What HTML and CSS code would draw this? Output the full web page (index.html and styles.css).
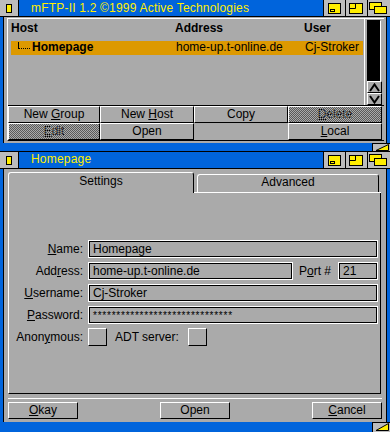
FILE: index.html
```html
<!DOCTYPE html>
<html>
<head>
<meta charset="utf-8">
<title>mFTP-II</title>
<link rel="stylesheet" href="styles.css">
</head>
<body>
<div class="win w1">
  <div class="titlebar">
    <div class="closegad"><svg width="18" height="16" viewBox="0 0 18 16"><rect x="6.5" y="4.5" width="5" height="8" fill="#ffee00" stroke="#000"/></svg></div>
    <div class="title">mFTP-II 1.2 ©1999 Active Technologies</div>
    <div class="gad"><svg width="21" height="16" viewBox="0 0 21 16"><rect x="4.5" y="3.5" width="12" height="10" fill="#ffee00" stroke="#000"/><rect x="6.5" y="9.5" width="4" height="2" fill="#ffee00" stroke="#000"/></svg></div>
    <div class="gad"><svg width="21" height="16" viewBox="0 0 21 16"><rect x="3.5" y="3.5" width="13" height="10" fill="#ffee00" stroke="#000"/><path d="M9.5 3.5V8.5H3.5" fill="none" stroke="#000"/></svg></div>
    <div class="gad last"><svg width="22" height="16" viewBox="0 0 22 16"><rect x="1.5" y="2.5" width="12" height="7" fill="#ffee00" stroke="#000"/><rect x="6.5" y="6.5" width="12" height="7" fill="#ffee00" stroke="#000"/></svg></div>
  </div>
  <div class="body b1">
    <div class="group">
      <div class="listrow">
        <div class="list">
          <div class="lhead"><span>Host</span><span>Address</span><span>User</span></div>
          <div class="lrow"><span class="host"><svg class="tree" width="14" height="12" viewBox="0 0 14 12"><path d="M1.5 1V8" stroke="#000"/><path d="M2 7.5H14" stroke="#000" stroke-dasharray="1 1"/></svg>Homepage</span><span class="cell">home-up.t-online.de</span><span class="cell">Cj-Stroker</span></div>
        </div>
        <div class="scroll">
          <div class="track"></div>
          <div class="arrow"><svg width="11" height="9" viewBox="0 0 11 9"><path d="M1 8L5.5 1.5L10 8" fill="none" stroke="#000" stroke-width="2"/></svg></div>
          <div class="arrow"><svg width="11" height="9" viewBox="0 0 11 9"><path d="M1 1L5.5 7.5L10 1" fill="none" stroke="#000" stroke-width="2"/></svg></div>
        </div>
      </div>
      <div class="btngrid">
        <div class="btn">New <u>G</u>roup</div>
        <div class="btn">New <u>H</u>ost</div>
        <div class="btn">Copy</div>
        <div class="btn ghost"><u>D</u>elete</div>
        <div class="btn ghost"><u>E</u>dit</div>
        <div class="btn">Open</div>
        <div class="empty"></div>
        <div class="btn"><u>L</u>ocal</div>
      </div>
    </div>
  </div>
  <div class="wbottom"><div class="sizer"><svg width="17" height="7" viewBox="0 0 17 7"><path d="M3 6.5L15.5 0.5V6.5Z" fill="#ffee00" stroke="#000"/></svg></div></div>
</div>

<div class="win w2">
  <div class="titlebar">
    <div class="closegad"><svg width="18" height="16" viewBox="0 0 18 16"><rect x="6.5" y="4.5" width="5" height="8" fill="#ffee00" stroke="#000"/></svg></div>
    <div class="title">Homepage</div>
    <div class="gad"><svg width="21" height="16" viewBox="0 0 21 16"><rect x="4.5" y="3.5" width="12" height="10" fill="#ffee00" stroke="#000"/><rect x="6.5" y="9.5" width="4" height="2" fill="#ffee00" stroke="#000"/></svg></div>
    <div class="gad"><svg width="21" height="16" viewBox="0 0 21 16"><rect x="3.5" y="3.5" width="13" height="10" fill="#ffee00" stroke="#000"/><path d="M9.5 3.5V8.5H3.5" fill="none" stroke="#000"/></svg></div>
    <div class="gad last"><svg width="22" height="16" viewBox="0 0 22 16"><rect x="1.5" y="2.5" width="12" height="7" fill="#ffee00" stroke="#000"/><rect x="6.5" y="6.5" width="12" height="7" fill="#ffee00" stroke="#000"/></svg></div>
  </div>
  <div class="body b2">
    <div class="tabs">
      <div class="tab on">Settings</div>
      <div class="tabgap"></div>
      <div class="tabrest"><div class="tab off">Advanced</div></div>
    </div>
    <div class="panel">
      <div class="form">
        <div class="lbl"><u>N</u>ame:</div>
        <div class="field">Homepage</div>
        <div class="lbl">Add<u>r</u>ess:</div>
        <div class="frow">
          <div class="field addr">home-up.t-online.de</div>
          <div class="portl">P<u>o</u>rt #</div>
          <div class="field port">21</div>
        </div>
        <div class="lbl"><u>U</u>sername:</div>
        <div class="field">Cj-Stroker</div>
        <div class="lbl"><u>P</u>assword:</div>
        <div class="field pass">******************************</div>
        <div class="lbl">Anon<u>y</u>mous:</div>
        <div class="frow">
          <div class="chk"></div>
          <div class="adt">ADT server:</div>
          <div class="chk"></div>
        </div>
      </div>
    </div>
    <div class="sep"></div>
    <div class="btnrow">
      <div class="btn btn2"><u>O</u>kay</div>
      <div class="btn btn2">Open</div>
      <div class="btn btn2"><u>C</u>ancel</div>
    </div>
  </div>
  <div class="wbottom b2bottom"><div class="sizer"><svg width="17" height="9" viewBox="0 0 17 9"><path d="M3 7.5L15.5 0.5V7.5Z" fill="#ffee00" stroke="#000"/></svg></div></div>
</div>
</body>
</html>
```
FILE: styles.css
```css
* { box-sizing: border-box; }
html, body { margin: 0; padding: 0; }
body {
  width: 390px;
  height: 432px;
  overflow: hidden;
  background: #0064dc;
  font-family: "Liberation Sans", Arial, sans-serif;
  font-size: 12px;
  line-height: 14px;
  color: #000;
}
u { text-decoration: underline; text-underline-offset: 1px; }
svg { display: block; }

.win { display: flex; flex-direction: column; background: #0064dc; }
.w2 { border-top: 1px solid #000; }

.titlebar { display: flex; height: 17px; border-bottom: 1px solid #000; flex: none; }
.closegad { width: 19px; height: 16px; background: #bcbcbc; border-right: 1px solid #000; flex: none; }
.title { flex: 1; padding: 1px 0 0 12px; color: #ffee00; letter-spacing: .2px; white-space: nowrap; }
.w2 .title { padding-top: 0; }
.gad { width: 22px; height: 16px; background: #bcbcbc; border-left: 1px solid #000; flex: none; }
.gad.last { width: 23px; }

.body {
  margin: 0 3px;
  border-left: 1px solid #000;
  border-right: 1px solid #000;
  background: #aaaaaa;
  flex: none;
}
.b1 { height: 126px; padding: 1px 2px 2px 3px; }

.group { border-top: 1px solid #fff; border-left: 1px solid #fff; border-bottom: 1px solid #000; }
.listrow { display: flex; height: 87px; border-bottom: 1px solid #000; }
.list { flex: 1; padding: 0 1px 0 3px; }
.lhead, .lrow { display: grid; grid-template-columns: 164px 129px 1fr; }
.lhead { font-weight: bold; padding: 2px 0 6px; line-height: 14px; }
.lrow { height: 14px; line-height: 12px; padding-bottom: 2px; background: #dd9900; white-space: nowrap; }
.lrow .cell { padding-left: 1px; }
.host { font-weight: bold; display: flex; }
.tree { margin-left: 6px; margin-right: 1px; flex: none; }

.scroll { width: 20px; border-left: 1px solid #fff; padding: 1px 2px 0 2px; display: flex; flex-direction: column; }
.track { height: 61px; width: 13px; background: #000; box-shadow: 1px 1px 0 #fff; }
.arrow { height: 12px; border: 1px solid; border-color: #fff #000 #000 #fff; display: flex; align-items: center; justify-content: center; }

.btngrid { display: grid; grid-template-columns: 92px 94px 94px 94px; grid-template-rows: 17px 17px; margin-right: 2px; }
.btn {
  border: 1px solid;
  border-color: #fff #000 #000 #fff;
  text-align: center;
  line-height: 14px;
  padding-bottom: 1px;
  white-space: nowrap;
}
.ghost { position: relative; }
.ghost::after {
  content: "";
  position: absolute;
  inset: 0;
  background: repeating-conic-gradient(#5a5a5a 0 25%, transparent 0 50%) 0 0 / 2px 2px;
}

.wbottom { display: flex; justify-content: flex-end; height: 8px; flex: none; }
.b2bottom { height: 10px; }
.sizer { width: 18px; background: #bcbcbc; border-left: 1px solid #000; border-top: 1px solid #000; }

.b2 { height: 253px; padding: 3px 4px 3px 4px; display: flex; flex-direction: column; }
.tabs { display: flex; height: 21px; margin-right: 1px; flex: none; }
.tab {
  border-top: 1px solid #fff;
  border-left: 1px solid #fff;
  border-right: 1px solid #000;
  border-radius: 3px 3px 0 0;
  text-align: center;
  line-height: 14px;
}
.tab.on { width: 186px; padding-top: 1px; }
.tabgap { width: 3px; border-bottom: 1px solid #fff; }
.tabrest { flex: 1; display: flex; align-items: flex-end; border-bottom: 1px solid #fff; padding-right: 2px; }
.tab.off { flex: 1; height: 18px; }

.panel {
  height: 201px;
  margin-right: 1px;
  border-left: 1px solid #fff;
  border-right: 1px solid #000;
  border-bottom: 1px solid #000;
  display: flex;
  flex-direction: column;
  justify-content: center;
  padding: 0 2px 0 0;
  flex: none;
}
.form { display: grid; grid-template-columns: 74px 1fr; column-gap: 5px; row-gap: 4px; align-items: center; }
.lbl { text-align: right; white-space: nowrap; }
.field {
  height: 18px;
  border: 1px solid #fff;
  box-shadow: inset 0 0 0 1px #000;
  padding: 1px 4px;
  line-height: 14px;
  white-space: nowrap;
  overflow: hidden;
}
.pass { font-size: 10px; letter-spacing: .77px; padding-top: 2px; }
.frow { display: flex; align-items: center; }
.addr { flex: 1; }
.portl { margin: 0 7px 0 6px; white-space: nowrap; }
.port { width: 40px; flex: none; }
.chk { width: 19px; height: 18px; border: 1px solid; border-color: #fff #000 #000 #fff; flex: none; }
.adt { margin: 0 9px 0 8px; white-space: nowrap; }

.sep { height: 1px; background: #fff; margin-top: 4px; flex: none; }
.btnrow { display: flex; justify-content: space-between; margin-top: 3px; flex: none; }
.btn2 { width: 70px; height: 17px; }
```
